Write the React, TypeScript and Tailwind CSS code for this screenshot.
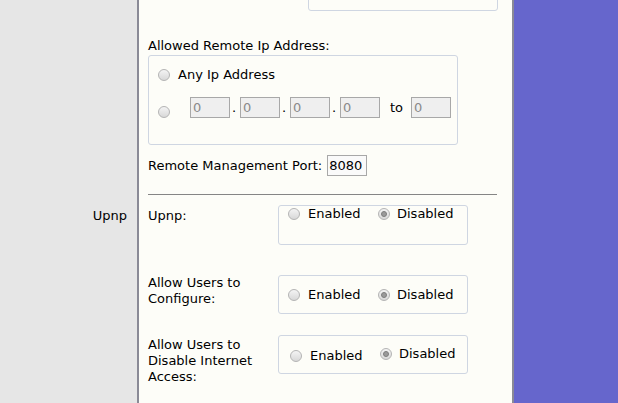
import React from "react";

function Radio({ checked = false, className = "" }: { checked?: boolean; className?: string }) {
    return (
        <span
            className={`inline-flex items-center justify-center w-[12px] h-[12px] shrink-0 rounded-full border border-[#b4b4b4] bg-gradient-to-b from-[#f4f4f4] to-[#d8d8d8] ${className}`}
        >
            {checked && (
                <span className="w-[6px] h-[6px] rounded-full bg-[#9a9a9a] border border-[#7d7d7d]" />
            )}
        </span>
    );
}

function IpBox({ value = "0" }: { value?: string }) {
    return (
        <span className="inline-flex items-center w-[40px] h-[21px] border border-[#a8a8a8] bg-[#efefef] pl-[2px] text-[#8a8a8a]">
            {value}
        </span>
    );
}

function Toggle({ offset = false }: { offset?: boolean }) {
    return (
        <div className="flex items-start">
            <div className={`flex items-center w-[90px] ${offset ? "ml-[2px] mt-[2px] w-[88px]" : ""}`}>
                <Radio />
                <span className="ml-[8px]">Enabled</span>
            </div>
            <div className="flex items-center">
                <Radio checked />
                <span className="ml-[7px]">Disabled</span>
            </div>
        </div>
    );
}

export default function App() {
    return (
        <div className="w-[618px] h-[403px] overflow-hidden bg-[#6666cc] font-['DejaVu_Sans',Verdana,sans-serif] text-[13px] leading-[16px] text-black">
            {/* Remote management section */}
            <div className="flex">
                <div className="w-[137px] shrink-0 bg-[#e6e6e6]" />
                <div className="w-[377px] shrink-0 bg-[#fdfdf8] border-x-2 border-[#8a8a96] pl-[9px] pr-[15px]">
                    <div className="ml-[160px] w-[190px] h-[30px] -mt-[19px] border border-[#cfd6e2] rounded-[3px]" />

                    <div className="mt-[27px]">Allowed Remote Ip Address:</div>

                    <div className="mt-[1px] w-[310px] h-[90px] border border-[#cfd6e2] rounded-[3px] pl-[9px] pt-[11px]">
                        <div className="flex items-center">
                            <Radio />
                            <span className="ml-[8px]">Any Ip Address</span>
                        </div>
                        <div className="flex items-center mt-[14px]">
                            <Radio className="mt-[8px]" />
                            <div className="flex items-center ml-[20px]">
                                <IpBox />
                                <span className="w-[10px] pl-[2px]">.</span>
                                <IpBox />
                                <span className="w-[10px] pl-[2px]">.</span>
                                <IpBox />
                                <span className="w-[10px] pl-[2px]">.</span>
                                <IpBox />
                                <span className="ml-[10px] mr-[8px]">to</span>
                                <IpBox />
                            </div>
                        </div>
                    </div>

                    <div className="flex items-center mt-[10px]">
                        <span>Remote Management Port:</span>
                        <span className="ml-[5px] inline-flex items-center w-[40px] h-[21px] border border-[#a8a8a8] bg-[#fafafa] pl-[1px]">
                            8080
                        </span>
                    </div>

                    <div className="mt-[18px] border-t border-[#858585]" />
                    <div className="h-[10px]" />
                </div>
                <div className="flex-1" />
            </div>

            {/* Upnp section */}
            <div className="flex">
                <div className="w-[137px] shrink-0 bg-[#e6e6e6] pr-[10px] pt-[3px] text-right">Upnp</div>
                <div className="w-[377px] shrink-0 bg-[#fdfdf8] border-x-2 border-[#8a8a96] pl-[9px] pr-[15px] pb-[40px]">
                    <div className="grid grid-cols-[130px_190px]">
                        <div className="pt-[3px]">Upnp:</div>
                        <div className="h-[40px] border border-[#cfd6e2] rounded-[3px] pl-[9px]">
                            <Toggle />
                        </div>
                    </div>

                    <div className="grid grid-cols-[130px_190px] mt-[30px]">
                        <div>
                            Allow Users to
                            <br />
                            Configure:
                        </div>
                        <div className="h-[39px] border border-[#cfd6e2] rounded-[3px] pl-[9px] flex items-center">
                            <Toggle />
                        </div>
                    </div>

                    <div className="grid grid-cols-[130px_190px] mt-[21px]">
                        <div className="pt-[2px]">
                            Allow Users to
                            <br />
                            Disable Internet
                            <br />
                            Access:
                        </div>
                        <div className="h-[39px] border border-[#cfd6e2] rounded-[3px] pl-[9px] flex items-center">
                            <Toggle offset />
                        </div>
                    </div>
                </div>
                <div className="flex-1" />
            </div>
        </div>
    );
}
